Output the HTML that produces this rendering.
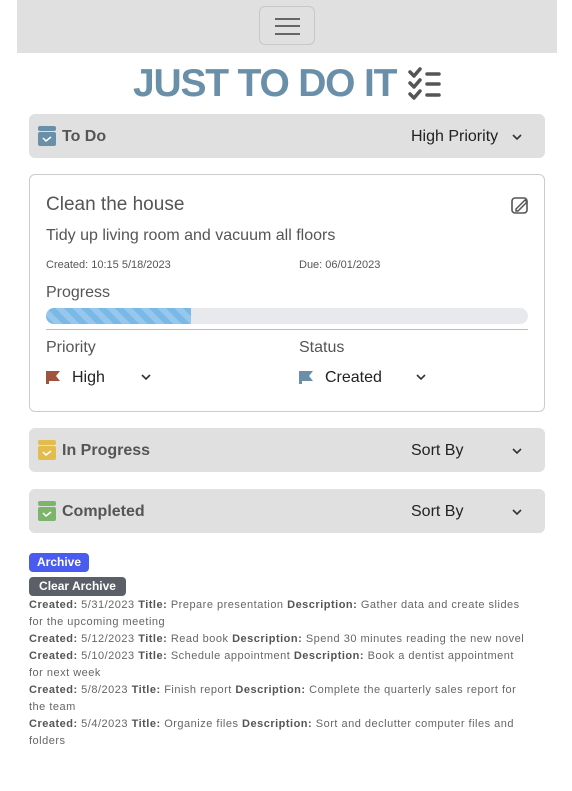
<!DOCTYPE html>
<html><head><meta charset="utf-8"><style>
*{box-sizing:border-box;margin:0;padding:0}
body{width:572px;height:791px;background:#fff;font-family:"Liberation Sans",Arial,sans-serif;position:relative;overflow:hidden;color:#555}
.abs{position:absolute}
.nav{left:17px;top:0;width:540px;height:53px;background:#e0e0e0}
.tog{left:259px;top:6px;width:56px;height:39px;border:1px solid #c8c8c8;border-radius:6px}
.tog i{position:absolute;left:15px;width:25px;height:2px;background:#666}
.title{left:133px;top:62px;font-size:39px;font-weight:bold;color:#6a8fa8;letter-spacing:-1.2px;white-space:nowrap}
.bar{left:29px;width:516px;height:44px;background:#e0e0e0;border-radius:6px}
.bar .lbl{position:absolute;left:33px;top:14px;font-size:16px;font-weight:bold;color:#555}
.bar .dd{position:absolute;left:382px;top:14px;font-size:16px;color:#222}
.bar svg.ch{position:absolute;left:482px;top:18px}
.bar .ic{position:absolute;left:9px;top:12px;width:18px;height:20px}
.card{left:29px;top:174px;width:516px;height:238px;border:1px solid #ccc;border-radius:6px}
.t{position:absolute;white-space:nowrap}
.arch{font-size:11px;line-height:17px;color:#666;left:29px;top:597px;width:500px;letter-spacing:0.5px}
.arch b{color:#555}
</style></head><body>
<div class="abs nav"></div>
<div class="abs tog"><i style="top:11px"></i><i style="top:18px"></i><i style="top:26px"></i></div>
<div class="abs title">JUST TO DO IT</div>
<svg class="abs" style="left:407px;top:67px" width="34" height="34" viewBox="0 0 34 34"><g fill="none" stroke="#555" stroke-width="3.5" stroke-linecap="round" stroke-linejoin="round"><path d="M3 5l4 4 6-7M3 16l4 4 6-7M3 27l4 4 6-7"/><path d="M20 7h12M20 17h12M20 28h12"/></g></svg>

<div class="abs bar" style="top:114px">
<svg class="ic" viewBox="0 0 18 20"><rect x="0" y="0" width="18" height="5" rx="2" fill="#6a8fa8"/><rect x="0" y="6" width="18" height="14" rx="2" fill="#6a8fa8"/><path d="M5 12l3 3 5-4" stroke="#fff" stroke-width="1.5" fill="none"/></svg>
<div class="lbl">To Do</div><div class="dd">High Priority</div>
<svg class="ch" width="12" height="10" viewBox="0 0 12 10"><path d="M2 3l4 4 4-4" stroke="#333" stroke-width="1.6" fill="none"/></svg></div>

<div class="abs card">
<div class="t" style="left:16px;top:19px;font-size:19px;color:#555">Clean the house</div>
<svg class="t" style="left:480px;top:20px" width="20" height="20" viewBox="0 0 20 20"><rect x="2" y="3" width="15" height="15" rx="3" fill="none" stroke="#555" stroke-width="1.6"/><path d="M6 14l9-9 2 2-9 9H6z" fill="#fff" stroke="#555" stroke-width="1.5"/></svg>
<div class="t" style="left:16px;top:52px;font-size:16px;color:#555">Tidy up living room and vacuum all floors</div>
<div class="t" style="left:16px;top:84px;font-size:11px;color:#555">Created: 10:15 5/18/2023</div>
<div class="t" style="left:269px;top:84px;font-size:11px;color:#555">Due: 06/01/2023</div>
<div class="t" style="left:16px;top:109px;font-size:16px;color:#555">Progress</div>
<div class="t" style="left:16px;top:133px;width:482px;height:16px;background:#e8e9ec;border-radius:8px;overflow:hidden"><div style="width:145px;height:16px;background:repeating-linear-gradient(45deg,#7ab8e6 0 6px,#96c8ee 6px 12px)"></div></div>
<div class="t" style="left:16px;top:154px;width:482px;height:1px;background:#bbb"></div>
<div class="t" style="left:16px;top:164px;font-size:16px;color:#555">Priority</div>
<div class="t" style="left:269px;top:164px;font-size:16px;color:#555">Status</div>
<svg class="t" style="left:16px;top:196px" width="14" height="13" viewBox="0 0 14 13"><path d="M0 0h14l-4 5 4 5H3v3H0z" fill="#a0543e"/></svg>
<div class="t" style="left:42px;top:194px;font-size:16px;color:#222">High</div>
<svg class="t" style="left:110px;top:197px" width="12" height="10" viewBox="0 0 12 10"><path d="M2 3l4 4 4-4" stroke="#333" stroke-width="1.6" fill="none"/></svg>
<svg class="t" style="left:269px;top:196px" width="14" height="13" viewBox="0 0 14 13"><path d="M0 0h14l-4 5 4 5H3v3H0z" fill="#6a8fa8"/></svg>
<div class="t" style="left:295px;top:194px;font-size:16px;color:#222">Created</div>
<svg class="t" style="left:385px;top:197px" width="12" height="10" viewBox="0 0 12 10"><path d="M2 3l4 4 4-4" stroke="#333" stroke-width="1.6" fill="none"/></svg>
</div>

<div class="abs bar" style="top:428px">
<svg class="ic" viewBox="0 0 18 20"><rect x="0" y="0" width="18" height="5" rx="2" fill="#e2bd4e"/><rect x="0" y="6" width="18" height="14" rx="2" fill="#e2bd4e"/><path d="M5 12l3 3 5-4" stroke="#fff" stroke-width="1.5" fill="none"/></svg>
<div class="lbl">In Progress</div><div class="dd">Sort By</div>
<svg class="ch" width="12" height="10" viewBox="0 0 12 10"><path d="M2 3l4 4 4-4" stroke="#333" stroke-width="1.6" fill="none"/></svg></div>

<div class="abs bar" style="top:489px">
<svg class="ic" viewBox="0 0 18 20"><rect x="0" y="0" width="18" height="5" rx="2" fill="#7db46c"/><rect x="0" y="6" width="18" height="14" rx="2" fill="#7db46c"/><path d="M5 12l3 3 5-4" stroke="#fff" stroke-width="1.5" fill="none"/></svg>
<div class="lbl">Completed</div><div class="dd">Sort By</div>
<svg class="ch" width="12" height="10" viewBox="0 0 12 10"><path d="M2 3l4 4 4-4" stroke="#333" stroke-width="1.6" fill="none"/></svg></div>

<div class="abs" style="left:29px;top:553px;width:60px;height:19px;background:#4a5cf0;border-radius:4px;color:#fff;font-size:12px;font-weight:bold;line-height:19px;text-align:center">Archive</div>
<div class="abs" style="left:29px;top:577px;width:97px;height:19px;background:#5b5f67;border-radius:4px;color:#fff;font-size:12px;font-weight:bold;line-height:19px;text-align:center">Clear Archive</div>
<div class="abs arch">
<div><b>Created:</b> 5/31/2023 <b>Title:</b> Prepare presentation <b>Description:</b> Gather data and create slides for the upcoming meeting</div>
<div><b>Created:</b> 5/12/2023 <b>Title:</b> Read book <b>Description:</b> Spend 30 minutes reading the new novel</div>
<div><b>Created:</b> 5/10/2023 <b>Title:</b> Schedule appointment <b>Description:</b> Book a dentist appointment for next week</div>
<div><b>Created:</b> 5/8/2023 <b>Title:</b> Finish report <b>Description:</b> Complete the quarterly sales report for the team</div>
<div><b>Created:</b> 5/4/2023 <b>Title:</b> Organize files <b>Description:</b> Sort and declutter computer files and folders</div>
</div>
</body></html>
